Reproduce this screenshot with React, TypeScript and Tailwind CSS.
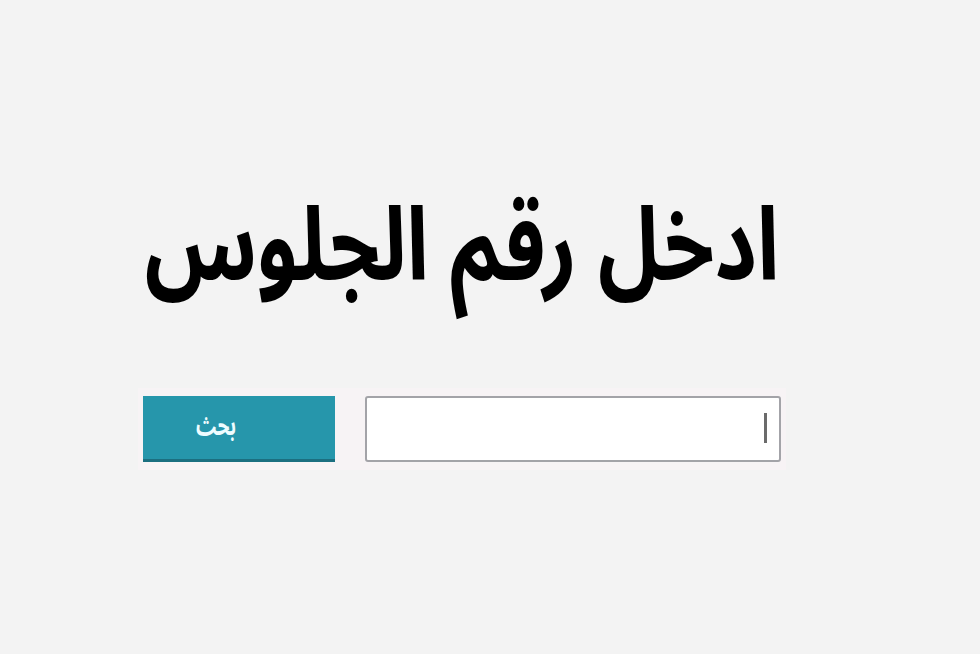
import React from "react";

export default function App() {
  return (
    <div className="w-[980px] h-[654px] bg-[#f3f3f3] overflow-hidden" style={{ fontFamily: '"Noto Sans Arabic", "DejaVu Sans", sans-serif' }}>
      <div className="ml-[138px] w-[648px] pt-[184px] flex flex-col items-center" dir="rtl">
        <h1 className="text-[82px] leading-[130px] font-bold text-black m-0 whitespace-nowrap scale-y-[1.24] -translate-y-[2px]">ادخل رقم الجلوس</h1>
        <div className="mt-[74px] w-[648px] bg-[#f7f3f5] px-[5px] py-[8px] flex flex-row items-center gap-[30px]">
          <div className="relative w-[416px] h-[66px] bg-white border-2 border-[#a3a3a8] rounded-[3px]">
            <div className="absolute right-[12px] top-[15px] w-[3px] h-[30px] bg-[#6b6b6b]" />
          </div>
          <button className="w-[192px] h-[66px] bg-[#2696ab] border-b-[3px] border-[#1c6f80] text-[#eefcff] flex items-center justify-center pr-[46px]">
            <span className="text-[19px] font-bold scale-y-[1.4]">بحث</span>
          </button>
        </div>
      </div>
    </div>
  );
}
